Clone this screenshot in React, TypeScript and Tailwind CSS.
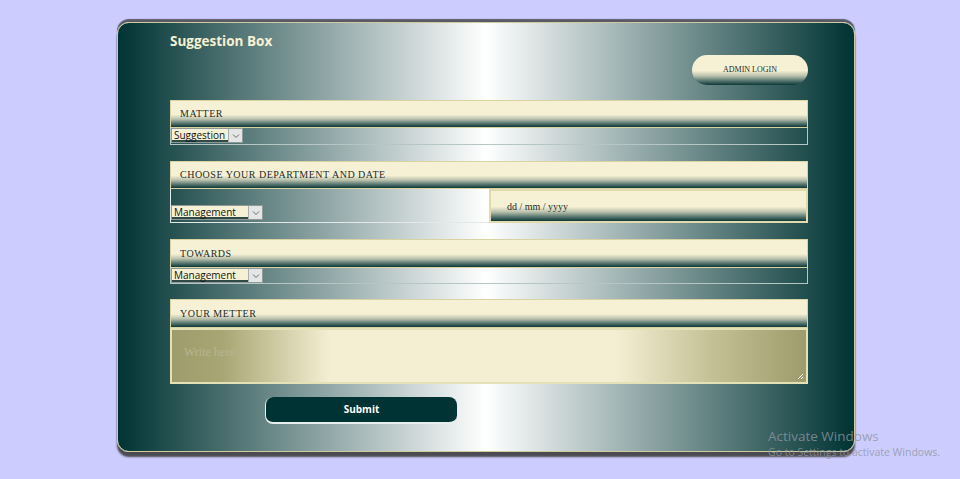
import React from "react";

const hdrGrad = "bg-[linear-gradient(to_bottom,#f6f1d4_0%,#f6f1d4_52%,#b8c0ac_70%,#5d7a74_85%,#0b3836_100%)]";

function Chevron() {
  return (
    <svg width="8" height="6" viewBox="0 0 8 6" className="block">
      <path d="M1 1.5 L4 4.5 L7 1.5" fill="none" stroke="#6b6b6b" strokeWidth="1" />
    </svg>
  );
}

function FakeSelect({ label, width }: { label: string; width: string }) {
  return (
    <div className={`flex h-[15px] ${width} border border-[#8f9a98] bg-[#f6f1d4]`}>
      <div className="flex-1 flex items-center pl-[2px] text-[10px] leading-none text-[#111] font-['Open_Sans',sans-serif] border-b-2 border-[#2f4a47] bg-[#f6f1d4]">
        {label}
      </div>
      <div className="w-[14px] flex items-center justify-center bg-[#e4e6e6] border-l border-[#a9b0b0]">
        <Chevron />
      </div>
    </div>
  );
}

function Header({ text, h = "h-[28px]" }: { text: string; h?: string }) {
  return (
    <div className={`${h} ${hdrGrad} border border-[#d9d3a3] flex items-center pl-[9px] pb-[1px]`}>
      <span className="font-['Liberation_Serif',serif] text-[10px] tracking-[0.5px] text-[#1c2b2a]">{text}</span>
    </div>
  );
}

export default function App() {
  return (
    <div className="w-[960px] h-[479px] bg-[#ccccff] relative overflow-hidden">
      <div className="absolute left-[117px] top-[22px] w-[738px] h-[430px] rounded-[12px] border border-[#cfcba0] bg-[linear-gradient(to_right,#033_0%,#fff_50%,#033_100%)] shadow-[0_-3px_1px_#5a5a66,0_5px_2px_#4a4a50]">
        <div className="flex flex-col pl-[52px] pr-[46px] pt-[9px]">
          <div className="h-[18px] flex items-center font-['Open_Sans',sans-serif] font-bold text-[13.5px] text-[#f6f1d4]">
            Suggestion Box
          </div>
          <div className="flex justify-end mt-[5px]">
            <div className={`w-[116px] h-[30px] rounded-full ${hdrGrad} flex items-center justify-center pb-[1px]`}>
              <span className="font-['Liberation_Serif',serif] text-[8px] text-[#1c2b2a]">ADMIN LOGIN</span>
            </div>
          </div>

          <div className="mt-[15px]">
            <Header text="MATTER" />
            <div className="h-[17px] border-x border-b border-[#b6c6c4]">
              <FakeSelect label="Suggestion" width="w-[72px]" />
            </div>
          </div>

          <div className="mt-[16px]">
            <Header text="CHOOSE YOUR DEPARTMENT AND DATE" />
            <div className="flex h-[34px]">
              <div className="w-[319px] shrink-0 flex flex-col justify-end pb-[2px] border-l border-b border-[#e4e8e8]">
                <FakeSelect label="Management" width="w-[92px]" />
              </div>
              <div className={`w-[319px] shrink-0 ${hdrGrad} border-2 border-[#e0daae] flex items-center pl-[16px]`}>
                <span className="font-['Liberation_Serif',serif] text-[10px] text-[#1c2b2a]">dd / mm / yyyy</span>
              </div>
            </div>
          </div>

          <div className="mt-[16px]">
            <Header text="TOWARDS" h="h-[29px]" />
            <div className="h-[16px] border-x border-b border-[#b6c6c4]">
              <FakeSelect label="Management" width="w-[92px]" />
            </div>
          </div>

          <div className="mt-[15px]">
            <Header text="YOUR METTER" h="h-[29px]" />
            <div className="relative h-[56px] border-2 border-[#e6e0b6] bg-[linear-gradient(to_right,#9e9c6c_0%,#a8a674_8%,#f4efd3_25%,#f4efd3_70%,#c4c196_85%,#9e9c6c_100%)] pl-[12px] pt-[8px]">
              <span className="font-['Liberation_Serif',serif] text-[12px] text-[#b9b590]">Write here</span>
              <svg className="absolute right-[2px] bottom-[2px]" width="7" height="7" viewBox="0 0 7 7">
                <path d="M6 1 L1 6 M6 4 L4 6" stroke="#fff" strokeWidth="1" />
              </svg>
            </div>
          </div>

          <div className="mt-[13px] pl-[95px]">
            <div className="w-[192px] h-[27px] rounded-[8px] bg-[#003333] border-b-2 border-l border-[#e8eeee] flex items-center justify-center">
              <span className="font-['Open_Sans',sans-serif] font-bold text-[10px] text-white">Submit</span>
            </div>
          </div>
        </div>
      </div>

      <div className="absolute left-[768px] top-[428px] font-['Open_Sans',sans-serif] text-[#8e96a0]/80 leading-tight">
        <div className="text-[13.5px]">Activate Windows</div>
        <div className="text-[10.5px] mt-[1px]">Go to Settings to activate Windows.</div>
      </div>
    </div>
  );
}
